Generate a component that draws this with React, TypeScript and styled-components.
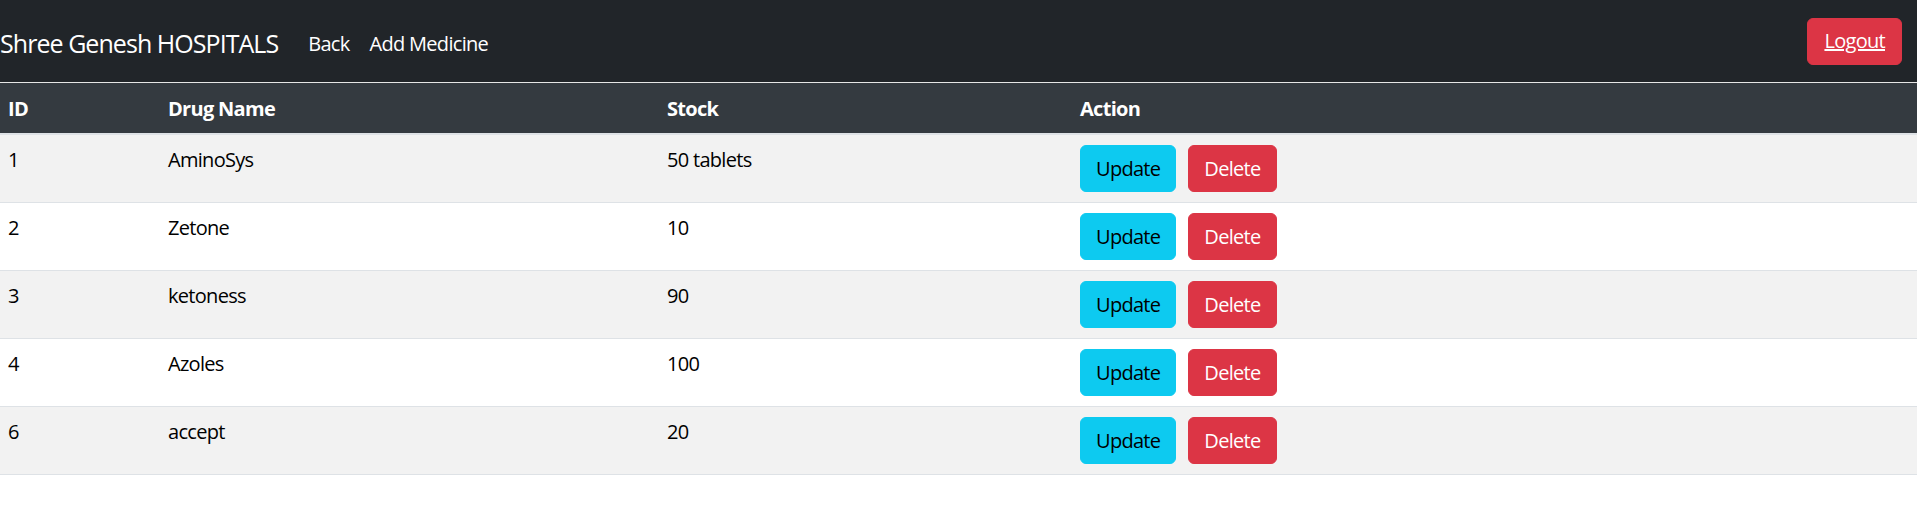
import React from 'react';
import styled, { createGlobalStyle } from 'styled-components';

type Medicine = {
  id: number;
  name: string;
  stock: string;
};

const medicines: Medicine[] = [
  { id: 1, name: 'AminoSys', stock: '50 tablets' },
  { id: 2, name: 'Zetone', stock: '10' },
  { id: 3, name: 'ketoness', stock: '90' },
  { id: 4, name: 'Azoles', stock: '100' },
  { id: 6, name: 'accept', stock: '20' },
];

export default function App() {
  return (
    <>
      <GlobalStyle />
      <Navbar>
        <NavLeft>
          <Brand href="#">Shree Genesh HOSPITALS</Brand>
          <NavLink href="#">Back</NavLink>
          <NavLink href="#">Add Medicine</NavLink>
        </NavLeft>
        <LogoutButton>
          <u>Logout</u>
        </LogoutButton>
      </Navbar>
      <Table>
        <colgroup>
          <col style={{ width: 160 }} />
          <col style={{ width: 499 }} />
          <col style={{ width: 413 }} />
          <col />
        </colgroup>
        <thead>
          <tr>
            <Th>ID</Th>
            <Th>Drug Name</Th>
            <Th>Stock</Th>
            <Th>Action</Th>
          </tr>
        </thead>
        <tbody>
          {medicines.map((m, i) => (
            <Row key={m.id} $striped={i % 2 === 0}>
              <Td>{m.id}</Td>
              <Td>{m.name}</Td>
              <Td>{m.stock}</Td>
              <Td>
                <Actions>
                  <ActionButton $variant="info">Update</ActionButton>
                  <ActionButton $variant="danger">Delete</ActionButton>
                </Actions>
              </Td>
            </Row>
          ))}
        </tbody>
      </Table>
    </>
  );
}

const GlobalStyle = createGlobalStyle`
  body {
    margin: 0;
    background: #fff;
    color: #212529;
    font-family: "Open Sans", "Noto Sans", sans-serif;
    font-size: 20px;
    line-height: 1.5;
    letter-spacing: -0.035em;
    overflow-x: hidden;
  }
`;

const Navbar = styled.nav`
  display: flex;
  align-items: center;
  justify-content: space-between;
  height: 82px;
  padding: 0 15px 0 0;
  background: #212529;
  border-bottom: 1px solid #e6e6e6;
`;

const NavLeft = styled.div`
  display: flex;
  align-items: center;
  padding-top: 5px;
`;

const Brand = styled.a`
  margin-right: 20px;
  color: #fff;
  font-size: 25px;
  line-height: 37px;
  letter-spacing: -0.038em;
  text-decoration: none;
  white-space: nowrap;
`;

const NavLink = styled.a`
  padding: 0 10px;
  color: #fff;
  font-size: 20px;
  line-height: 30px;
  text-decoration: none;
`;

const LogoutButton = styled.button`
  padding: 7.5px 16px;
  border: 1px solid #dc3545;
  border-radius: 6px;
  background: #dc3545;
  color: #fff;
  font-family: inherit;
  font-size: 20px;
  line-height: 30px;
  letter-spacing: inherit;
  cursor: pointer;
`;

const Table = styled.table`
  width: calc(100% + 2px);
  margin-left: -2px;
  border-collapse: collapse;
  table-layout: fixed;
`;

const Th = styled.th`
  padding: 11px 10px 9px;
  background: #343a40;
  border-bottom: 2px solid #dee2e6;
  color: #fff;
  font-weight: 700;
  line-height: 30px;
  text-align: left;
`;

const Row = styled.tr<{ $striped: boolean }>`
  background: ${(p) => (p.$striped ? '#f2f2f2' : '#fff')};
  border-bottom: 1px solid #dee2e6;
`;

const Td = styled.td`
  padding: 10px;
  line-height: 30px;
  vertical-align: top;
  color: #000;
`;

const Actions = styled.div`
  display: flex;
  gap: 12px;
`;

const ActionButton = styled.button<{ $variant: 'info' | 'danger' }>`
  padding: 7.5px 15px;
  border: 1px solid ${(p) => (p.$variant === 'info' ? '#0dcaf0' : '#dc3545')};
  border-radius: 6px;
  background: ${(p) => (p.$variant === 'info' ? '#0dcaf0' : '#dc3545')};
  color: ${(p) => (p.$variant === 'info' ? '#000' : '#fff')};
  font-family: inherit;
  font-size: 20px;
  line-height: 30px;
  letter-spacing: inherit;
  cursor: pointer;
`;
